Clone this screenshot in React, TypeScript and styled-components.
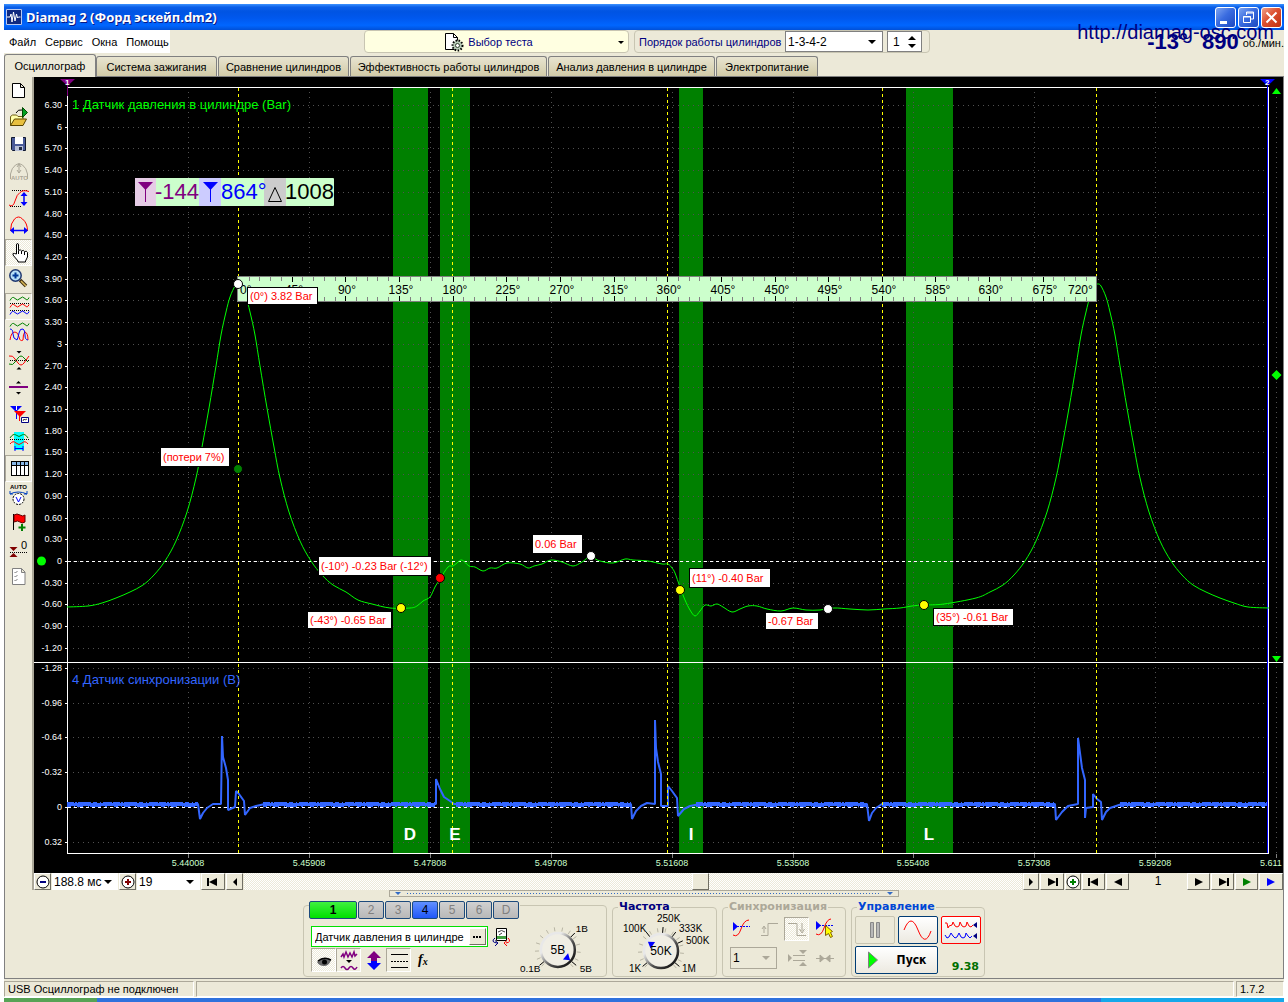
import React from "react";
import styled, { createGlobalStyle, css } from "styled-components";

const SANS = `"Liberation Sans", Arial, sans-serif`;
const FACE = "#ece9d8";
const checker = "repeating-conic-gradient(#ffffff 0 25%, #ece9d8 0 50%) 0 0 / 2px 2px";

const Global = createGlobalStyle`
  * { box-sizing: border-box; }
  body { margin: 0; background: #ffffff; font: 11px/14px ${SANS}; color: #000000; }
  button, select, input, output { font: inherit; color: inherit; margin: 0; }
  button { padding: 0; }
`;

const Shell = styled.div`
  position: relative;
  padding: 4px 4px 0;
`;

/* ---------- title bar ---------- */
const TitleBar = styled.header`
  display: flex;
  align-items: center;
  gap: 4px;
  height: 26px;
  padding: 0 2px;
  background: linear-gradient(#3c92ff 0, #0a5ee8 12%, #0054e3 30%, #0058ee 55%, #0066ff 82%, #0050d8 100%);
`;
const Title = styled.h1`
  flex: 1;
  margin: 0;
  color: #ffffff;
  font: bold 13px/18px "Noto Sans", sans-serif;
  text-shadow: 1px 1px 0 #0a1883;
`;
const WinButtons = styled.div`
  display: flex;
  gap: 2px;
`;
const WinButton = styled.button<{ $close?: boolean }>`
  width: 21px;
  height: 21px;
  border: 1px solid #ffffff;
  border-radius: 3px;
  background: ${(p) =>
    p.$close
      ? "linear-gradient(135deg, #f0a088, #dc5030 45%, #c03010)"
      : "linear-gradient(135deg, #7ea4f0, #3a6ce0 45%, #1c48c0)"};
  svg { display: block; }
`;

/* ---------- header ---------- */
const Header = styled.div`
  display: flex;
  align-items: stretch;
  height: 24px;
  padding-bottom: 1px;
  background: ${FACE};
`;
const Menu = styled.nav`
  display: flex;
  align-items: center;
  gap: 9px;
  width: 166px;
  margin-right: 194px;
  padding-left: 5px;
  background: #ffffff;
  a { color: #000000; text-decoration: none; }
`;
const TestButton = styled.button`
  display: flex;
  align-items: center;
  justify-content: center;
  gap: 4px;
  position: relative;
  width: 265px;
  padding-right: 16px;
  border: 1px solid #c8c5b2;
  border-radius: 4px;
  background: #ffffe1;
  color: #000080;
`;
const ButtonArrow = styled.span`
  position: absolute;
  right: 4px;
  top: 10px;
  border: 3px solid transparent;
  border-top-color: #000000;
  border-bottom: 0;
`;
const OrderBox = styled.div`
  display: flex;
  align-items: center;
  gap: 4px;
  width: 296px;
  margin-left: 5px;
  padding-left: 4px;
  border: 1px solid #c8c5b2;
  border-radius: 4px;
  color: #000080;
`;
const OrderLabel = styled.label`
  width: 142px;
  white-space: nowrap;
`;
const SelectWrap = styled.span<{ $w: number; $h: number; $edge?: string; $arrow?: string; $bg?: string }>`
  position: relative;
  display: block;
  width: ${(p) => p.$w}px;
  height: ${(p) => p.$h}px;
  border: ${(p) => (p.$edge ? `1px solid ${p.$edge}` : "0")};
  background: ${(p) => p.$bg || "#ffffff"};
  &::after {
    content: "";
    position: absolute;
    right: 6px;
    top: calc(50% - 2px);
    border: 4px solid transparent;
    border-top-color: ${(p) => p.$arrow || "#000000"};
    border-bottom: 0;
    pointer-events: none;
  }
  select {
    appearance: none;
    width: 100%;
    height: 100%;
    padding: 0 0 0 2px;
    border: 0;
    outline: 0;
    background: transparent;
    color: #000000;
    font: 12px/14px ${SANS};
    opacity: 1;
  }
`;
const Spin = styled.span`
  display: flex;
  align-items: center;
  justify-content: space-between;
  width: 35px;
  height: 21px;
  padding: 0 5px;
  border: 1px solid #808080;
  background: #ffffff;
  color: #000000;
  input {
    width: 14px;
    padding: 0;
    border: 0;
    background: transparent;
    font: 12px/14px ${SANS};
  }
`;
const Readout = styled.div`
  display: flex;
  flex: 1;
  align-items: flex-end;
  justify-content: flex-end;
  gap: 4px;
  padding-bottom: 1px;
  color: #000080;
  font: bold 22px/20px ${SANS};
  white-space: nowrap;
  span { margin-right: 10px; }
  small { color: #000000; font: 11px/18px ${SANS}; }
`;
const SiteLink = styled.a`
  position: absolute;
  top: 20px;
  right: 14px;
  color: #000080;
  font: 20px/24px ${SANS};
  text-decoration: none;
`;

/* ---------- tabs ---------- */
const Tabs = styled.div`
  display: flex;
  align-items: flex-end;
  gap: 1px;
  height: 23px;
  background: ${FACE};
  border-bottom: 1px solid #808080;
`;
const Tab = styled.button<{ $w: number; $active?: boolean }>`
  width: ${(p) => p.$w}px;
  height: 20px;
  border: 1px solid #808080;
  border-bottom: 0;
  border-radius: 3px 3px 0 0;
  background: linear-gradient(#e8e4d0, #d2cba8);
  white-space: nowrap;
  ${(p) =>
    p.$active &&
    css`
      height: 23px;
      margin: 0 -1px -1px 0;
      background: ${FACE};
    `}
`;

/* ---------- workspace ---------- */
const Workspace = styled.main`
  display: flex;
  background: ${FACE};
  border-left: 1px solid #808080;
`;
const Toolbar = styled.div`
  display: flex;
  flex-direction: column;
  width: 29px;
  border-right: 2px solid #aca899;
`;
const Tool = styled.button<{ $on?: boolean; $checked?: boolean }>`
  display: flex;
  align-items: center;
  justify-content: center;
  width: 27px;
  height: 27px;
  border: 1px solid transparent;
  background: transparent;
  ${(p) =>
    p.$on &&
    css`
      border-color: #aca899 #ffffff #ffffff #aca899;
      background: ${p.$checked ? checker : "#f0eee0"};
    `}
  svg { display: block; flex: none; }
`;
const Stage = styled.div`
  flex: 1;
  min-width: 0;
  border-right: 1px solid #808080;
`;
const Scope = styled.svg`
  display: block;
  width: 100%;
  height: auto;
  background: #000000;
`;
const NavRow = styled.div`
  display: flex;
  align-items: stretch;
  gap: 1px;
  height: 17px;
`;
const NavButton = styled.button<{ $w: number }>`
  display: flex;
  align-items: center;
  justify-content: center;
  flex: none;
  width: ${(p) => p.$w}px;
  border: 1px solid;
  border-color: #ffffff #716f64 #716f64 #ffffff;
  background: ${FACE};
  svg { display: block; }
`;
const Scroll = styled.input`
  appearance: none;
  flex: 1;
  min-width: 0;
  height: 17px;
  background: ${checker};
  &::-webkit-slider-thumb {
    appearance: none;
    width: 17px;
    height: 17px;
    border: 1px solid;
    border-color: #ffffff #716f64 #716f64 #ffffff;
    background: ${FACE};
  }
`;
const PageNo = styled.output`
  width: 56px;
  text-align: center;
  font: 12px/17px ${SANS};
`;

/* ---------- lower dock ---------- */
const Dock = styled.section`
  display: flex;
  flex-direction: column;
  align-items: center;
  height: 89px;
  background: ${FACE};
  border: solid #808080;
  border-width: 0 1px 1px;
`;
const Splitter = styled.div`
  display: flex;
  align-items: center;
  gap: 6px;
  width: 510px;
  height: 7px;
  margin-bottom: 1px;
  padding: 0 5px;
  border: 1px solid #aca899;
  i { border: 3px solid transparent; border-top-color: #316ac5; border-bottom: 0; }
  span { flex: 1; height: 1px; background: repeating-linear-gradient(90deg, #316ac5 0 1px, transparent 1px 3px); }
`;
const Panels = styled.div`
  display: flex;
  gap: 5px;
`;
const Group = styled.fieldset<{ $w: number }>`
  width: ${(p) => p.$w}px;
  height: 79px;
  min-width: 0;
  margin: 0;
  padding: 0 3px;
  border: 1px solid #c8c5b2;
  border-radius: 4px;
`;
const Legend = styled.legend<{ $c: string }>`
  margin-left: 2px;
  padding: 0 1px;
  color: ${(p) => p.$c};
  font: bold 11px/18px "DejaVu Sans", sans-serif;
  margin-bottom: -4px;
`;
const ChannelGroup = styled.div`
  display: flex;
  width: 304px;
  height: 72px;
  margin-top: 7px;
  padding-left: 5px;
  border: 1px solid #c8c5b2;
  border-radius: 4px;
`;
const ChannelMain = styled.div`
  display: flex;
  flex-direction: column;
  width: 212px;
  margin-top: -5px;
`;
const ChannelTabs = styled.div`
  display: flex;
  gap: 1px;
  height: 18px;
  background: ${FACE};
`;
const Channel = styled.button<{ $w?: number; $bg?: string }>`
  width: ${(p) => p.$w || 26}px;
  border: 1px solid #1c4a7c;
  border-radius: 2px;
  background: ${(p) => p.$bg || "linear-gradient(#d0d0d0, #b8b8b8)"};
  color: ${(p) => (p.$bg ? "#000000" : "#808080")};
  font: ${(p) => (p.$w ? "bold " : "")}12px/14px ${SANS};
`;
const SensorRow = styled.div`
  display: flex;
  align-items: center;
  gap: 4px;
  margin-top: 7px;
`;
const SensorField = styled.span`
  display: flex;
  width: 177px;
  height: 21px;
  margin-left: 2px;
  padding: 1px;
  border: 1px solid #00e000;
  background: #ffffff;
  input {
    flex: 1;
    min-width: 0;
    padding: 0 0 0 2px;
    border: 0;
    background: transparent;
  }
`;
const ToggleRow = styled.div`
  display: flex;
  margin: 1px 0 0 2px;
`;
const Toggle = styled(Tool)`
  width: 25px;
  height: 24px;
`;
const SyncGrid = styled.div`
  display: grid;
  grid-template-columns: 28px 28px 28px 28px;
  grid-template-rows: 26px 24px;
  row-gap: 4px;
  padding: 4px 2px 0;
  align-items: center;
`;
const SyncSelect = styled.div`
  grid-column: span 2;
  padding-left: 2px;
`;
const ControlGrid = styled.div`
  display: grid;
  grid-template-columns: 40px 40px 40px;
  grid-template-rows: 28px 28px;
  gap: 2px 3px;
  padding-top: 4px;
`;
const ControlButton = styled.button<{ $edge: string; $wide?: boolean }>`
  display: flex;
  align-items: center;
  justify-content: center;
  grid-column: ${(p) => (p.$wide ? "span 2" : "auto")};
  gap: 18px;
  border: 1px solid ${(p) => p.$edge};
  border-radius: 2px;
  background: ${(p) => (p.$edge === "#c8c5b2" ? FACE : "linear-gradient(#ffffff, #ece9e0)")};
  font: bold 12px/14px "DejaVu Sans Condensed", sans-serif;
  svg { display: block; }
`;
const Volts = styled.output`
  align-self: end;
  padding: 0 2px 0 0;
  text-align: right;
  color: #007000;
  font: bold 11px/14px "DejaVu Sans", sans-serif;
`;

/* ---------- status ---------- */
const Status = styled.footer`
  display: flex;
  gap: 2px;
  height: 19px;
  padding-top: 2px;
  background: ${FACE};
  border-bottom: 1px solid #ffffff;
`;
const Cell = styled.div<{ $w?: number }>`
  flex: ${(p) => (p.$w ? `0 0 ${p.$w}px` : "1")};
  padding-left: 3px;
  border: 1px solid;
  border-color: #aca899 #ffffff #ffffff #aca899;
`;
const Taskbar = styled.div`
  display: flex;
  height: 4px;
  background: #2f72dd;
  &::before { content: ""; width: 93px; background: #57a355; }
  &::after { content: ""; width: 183px; margin-left: auto; background: #16a8ea; }
`;

/* ---------- toolbar drawings ---------- */
const wave = (y: number, a: number, x0 = 3) =>
  `M${x0} ${y + a}q2.5 ${-2.5 * a} 5 ${-a}t5 0t5 0t4 ${-a / 2}`;
const dots = (y: number, x1 = 3, x2 = 22) => (
  <path d={`M${x1} ${y}H${x2}`} stroke="#000" strokeDasharray="1 1" shapeRendering="crispEdges" />
);
const up = (x: number, y: number, r = 2.5, c = "#000") => <path d={`M${x - r} ${y + r}h${2 * r}l${-r} ${-r}z`} fill={c} stroke="none" />;
const down = (x: number, y: number, r = 2.5, c = "#000") => <path d={`M${x - r} ${y}h${2 * r}l${-r} ${r}z`} fill={c} stroke="none" />;

const tools: { name: string; on?: boolean; checked?: boolean; art: React.ReactNode }[] = [
  { name: "Новый", art: <path d="M5.500 5.500h8l4 4v10h-12zM13.500 5.500v4h4" fill="#fff" stroke="#000" /> },
  {
    name: "Открыть",
    art: (
      <>
        <path d="M3.500 20.500v-9l2-1.500h4l1.500 1.500h5v3" fill="#ffffa8" stroke="#6b5a10" />
        <path d="M3.500 20.500l4-6.500h12l-3.500 6.500z" fill="#e8c040" stroke="#5a4500" />
        <path d="M15.500 2.500v10l5-5z" fill="#00a020" stroke="#004800" />
        <path d="M9 8q2-4 6-3" stroke="#000" />
      </>
    ),
  },
  {
    name: "Сохранить",
    art: (
      <>
        <path d="M4.500 5.500h14v13h-13l-1-1z" fill="#4a5a98" stroke="#101830" />
        <path d="M8 5h8v7h-8z" fill="#fff" />
        <path d="M8 14h8v5h-8z" fill="#b8c0d8" />
        <path d="M12 15h3v3h-3z" fill="#202840" />
      </>
    ),
  },
  {
    name: "Авто",
    art: (
      <>
        <path d="M3.500 15q1-6 5-9q3.500-3 7 0q4 3 5 9v5M3.500 15v5M12 5v9M10 8l2-3 2 3M10 11l2 3 2-3" stroke="#aca899" />
        <text x="4" y="21" fontSize="6" fill="#aca899" stroke="none" fontFamily={SANS} fontWeight="bold">AUTO</text>
      </>
    ),
  },
  {
    name: "Масштаб по вертикали",
    art: (
      <>
        {dots(4.5, 5, 21)}
        {dots(20.5, 3, 14)}
        <path d="M2 19q4 3 6-4t5-8.500q3-3 9-1" stroke="#f00" />
        <path d="M17 7v12" stroke="#00f" strokeWidth="1.500" />
        <path d="M13.500 10l3.500-4 3.500 4zM13.500 16l3.500 4 3.500-4z" fill="#00f" />
      </>
    ),
  },
  {
    name: "Масштаб по горизонтали",
    art: (
      <>
        <path d="M3.500 18q0-8 4-12q4-4 8 0q5 4 5 12" stroke="#f00" />
        <path d="M4 17.500h16" stroke="#00f" strokeWidth="1.500" />
        <path d="M7 14l-4 3.500 4 3.500zM17 14l4 3.500-4 3.500z" fill="#00f" />
      </>
    ),
  },
  {
    name: "Рука",
    on: true,
    checked: true,
    art: (
      <path
        d="M9.500 14v-9q0-1.500 1-1.500t1 1.500v5.500q2-1.500 3 .5q2-1.500 3 .5q2-1 3 1v4.500l-2 4v1h-7.500v-1l-5-6q-.5-2.500 1.500-1.500zM11.500 11v3M14.500 11v3M17.500 12v3"
        fill="#fff"
        stroke="#000"
      />
    ),
  },
  {
    name: "Лупа",
    art: (
      <>
        <path d="M13 13l6 6" stroke="#403010" strokeWidth="3.500" />
        <path d="M14 14l5 5" stroke="#d8b858" strokeWidth="1.500" />
        <circle cx="8.500" cy="8.500" r="5.700" fill="#b8e0f8" stroke="#203870" strokeWidth="1.500" />
        <path d="M8.500 5.500v6M5.500 8.500h6" stroke="#003898" strokeWidth="2" />
      </>
    ),
  },
  {
    name: "Раздельно",
    on: true,
    art: (
      <>
        <path d={wave(4.5, 2)} stroke="#008000" />
        {dots(9.5)}
        <path d={wave(11.5, 2)} stroke="#f00" />
        {dots(16.5)}
        <path d={wave(18.5, 2)} stroke="#00f" />
      </>
    ),
  },
  {
    name: "Совместно",
    art: (
      <>
        <path d={wave(3.5, 2)} stroke="#008000" />
        <path d="M3 19q1-8 5-8q3 0 4 5t4 3q0-7 2-8q3 1 3 8" stroke="#f00" />
        <path d="M3 8q3 0 3 5t4 6q1-2 2-7t4-4q2 1 2 6t3 5" stroke="#00f" />
      </>
    ),
  },
  {
    name: "Центр",
    art: (
      <>
        <path d="M2 16q4 2 6-2l3-4q3-4 6 0l4 4" stroke="#008000" />
        <path d="M2 8q4-1 6 3l3 4q3 4 6 0l5-7" stroke="#f00" />
        {dots(12.5)}
        {down(12, 3)}
        {up(12, 19)}
      </>
    ),
  },
  {
    name: "Линия",
    art: (
      <>
        <path d="M2 12h19" stroke="#800080" strokeWidth="2" />
        {up(11.5, 6)}
        {down(11.5, 17)}
      </>
    ),
  },
  {
    name: "Маркеры",
    art: (
      <>
        <path d="M3 4h12l-6 6z" fill="#00f" />
        <path d="M9.500 8v9" stroke="#00f" />
        <path d="M7 9h12l-6 6z" fill="#f00" />
        <path d="M12.500 13v6" stroke="#f00" />
        <path d="M9.500 4v4" stroke="#fff" />
        <path d="M14.500 15.500h7v5h-7z" fill="#fff" stroke="#000080" />
        <path d="M16 19l1-2 1 1 2-1" stroke="#404040" />
      </>
    ),
  },
  {
    name: "Период",
    art: (
      <>
        <path d="M7 3h10v18h-10z" fill="#00ffff" />
        <path d="M3 9q3-5 6-3q3 3 6 0q3-2 6 3" stroke="#008000" />
        <path d="M3 15q3-4 6-1q3 3 6 0q3-3 6 1" stroke="#f00" />
        {dots(10.5)}
        <path d="M8 19.500h8M8 17v5M16 17v5" stroke="#00f" />
      </>
    ),
  },
  {
    name: "Таблица",
    on: true,
    art: (
      <g shapeRendering="crispEdges">
        <path d="M4.500 5.500h17v14h-17z" fill="#fff" stroke="#000" />
        <path d="M5 6h16v3h-16z" fill="#88b8e8" />
        <path d="M5 9.500h16M9.500 6v13M13.500 6v13M17.500 6v13" stroke="#000" />
      </g>
    ),
  },
  {
    name: "Авто напряжение",
    art: (
      <>
        <text x="3" y="6" fontSize="6" fill="#000" fontFamily={SANS} fontWeight="bold">AUTO</text>
        <circle cx="11.500" cy="16" r="5.500" fill="#fff" stroke="#000" strokeDasharray="2 1" />
        <path d="M9 14l2.500 5 2.500-5" stroke="#00f" />
        <path d="M3 11q8-4 17 0M3 8v3h3M20 8v3h-3" stroke="#0040c0" />
      </>
    ),
  },
  {
    name: "Флаг",
    art: (
      <>
        <path d="M6.500 4v16" stroke="#000" />
        <path d="M7 5q3-2 6 0t5 0v7q-3 2-5 0t-6 0z" fill="#f00" stroke="#600000" />
        <path d="M15 14v7M11.500 17.500h7" stroke="#008000" strokeWidth="2" />
      </>
    ),
  },
  {
    name: "Ноль",
    art: (
      <>
        {down(6.5, 10, 4, "#800000")}
        {up(6.5, 16, 4, "#800000")}
        {dots(15, 3, 21)}
        <text x="14" y="12" fontSize="11" fill="#000" fontFamily={SANS}>0</text>
      </>
    ),
  },
  {
    name: "Отчёт",
    art: (
      <>
        <path d="M5.500 4.500h9l3.500 3.500v12.500h-12.500zM14.500 4.500v4h3.500" fill="#fff" stroke="#808080" />
        <path d="M7.500 8l1 1 2-2M7.500 12l1 1 2-2M7.500 16l1 1 2-2" stroke="#808080" />
      </>
    ),
  },
];

/* ---------- oscilloscope ---------- */
type Pt = [number, number];
const line = (pts: Pt[]) => "M" + pts.map((p) => p.join(" ")).join("L");

const smooth = (pts: Pt[]) => {
  let d = `M${pts[0][0]} ${pts[0][1]}`;
  for (let i = 0; i < pts.length - 1; i++) {
    const a = pts[Math.max(0, i - 1)];
    const b = pts[i];
    const c = pts[i + 1];
    const e = pts[Math.min(pts.length - 1, i + 2)];
    d += `C${b[0] + (c[0] - a[0]) / 6} ${b[1] + (c[1] - a[1]) / 6} ${c[0] - (e[0] - b[0]) / 6} ${c[1] - (e[1] - b[1]) / 6} ${c[0]} ${c[1]}`;
  }
  return d;
};

/* half of a compression peak: distance from top dead centre, level */
const flank: Pt[] = [
  [0, 284], [3, 286], [8, 297], [12, 312], [17, 335], [22, 366], [29, 408], [36, 447], [42, 478], [51, 512],
  [62, 541], [73, 561], [84, 575], [95, 585], [108, 592], [122, 598], [136, 603], [150, 606], [171, 607],
];
const pressure: Pt[] = [
  ...flank.slice().reverse().map(([d, y]): Pt => [238 - d, y]),
  ...flank.slice(1, 15).map(([d, y]): Pt => [238 + d, y]),
  [358, 600], [372, 604], [390, 608], [410, 608], [417, 606], [423, 601], [430, 597], [435, 587], [440, 579],
  [448, 567], [453, 566], [457, 563], [462, 560], [469, 566], [475, 567], [483, 571], [490, 568], [497, 568],
  [507, 563], [520, 564], [528, 568], [534, 566], [542, 564], [551, 560], [562, 562], [573, 566], [582, 562],
  [590, 557], [600, 561], [613, 563], [625, 559], [633, 560], [648, 561], [662, 564], [668, 564], [672, 568],
  [675, 573], [680, 587], [685, 600], [690, 610], [695, 616], [700, 611], [705, 605], [711, 606], [717, 604],
  [723, 607], [732, 612], [740, 609], [748, 606], [757, 606], [767, 609], [781, 611], [793, 608], [806, 610],
  [820, 610], [834, 608], [850, 609], [868, 610], [884, 609], [900, 608], [912, 606], [924, 605], [944, 604],
  ...flank.slice(0, 16).reverse().map(([d, y]): Pt => [1098 - d, y]),
  ...flank.slice(1).map(([d, y]): Pt => [1098 + d, y + (d > 140 ? 1 : 0)]),
];

const sync: Pt[] = [
  [67, 804], [198, 804], [200, 819], [203, 813], [207, 808], [213, 804], [221, 804], [222, 736], [223, 757],
  [226, 768], [228, 780], [228, 810], [235, 807], [236, 791], [239, 794], [244, 801], [245, 815], [250, 808],
  [256, 806], [265, 804], [436, 804], [436, 779], [440, 789], [444, 797], [450, 801], [454, 804], [631, 804],
  [632, 819], [636, 811], [641, 806], [647, 803], [655, 804], [655, 720], [656, 748], [658, 762], [661, 774],
  [661, 806], [668, 806], [668, 786], [672, 791], [677, 798], [678, 816], [684, 809], [690, 806], [700, 804],
  [867, 804], [869, 821], [872, 813], [876, 808], [882, 804], [1055, 804], [1056, 820], [1062, 812], [1068, 806],
  [1078, 804], [1078, 738], [1080, 753], [1082, 768], [1085, 780], [1085, 818], [1086, 808], [1093, 807],
  [1093, 794], [1097, 799], [1101, 802], [1102, 820], [1106, 812], [1110, 808], [1122, 804], [1267, 804],
];
const quiet: Pt[] = [[67, 198], [263, 435], [456, 631], [696, 867], [882, 1055], [1120, 1267]];

const bands = [
  { x: 393, w: 35, name: "D" },
  { x: 440, w: 30, name: "E" },
  { x: 679, w: 24, name: "I" },
  { x: 906, w: 47, name: "L" },
];
const upperTicks = Array.from({ length: 26 }, (_, i) => {
  const v = 6.3 - i * 0.3;
  const whole = i % 10 === 1 || i === 21;
  return { y: Math.round(105 + i * 21.714), label: whole ? String(Math.abs(Math.round(v))) : v.toFixed(2) };
});
const lowerTicks = [
  { y: 668, label: "-1.28" }, { y: 703, label: "-0.96" }, { y: 737, label: "-0.64" },
  { y: 772, label: "-0.32" }, { y: 807, label: "0" }, { y: 842, label: "0.32" },
];
const ticks = [...upperTicks, ...lowerTicks];
const times = ["5.44008", "5.45908", "5.47808", "5.49708", "5.51608", "5.53508", "5.55408", "5.57308", "5.59208", "5.611"];
const timeX = (i: number) => Math.round(188 + i * 120.9);

const notes = [
  { x: 160, y: 448, w: 69, h: 18, t: "(потери 7%)" },
  { x: 318, y: 557, w: 113, h: 18, t: "(-10°) -0.23 Bar (-12°)" },
  { x: 307, y: 612, w: 84, h: 16, t: "(-43°) -0.65 Bar" },
  { x: 532, y: 535, w: 50, h: 18, t: "0.06 Bar" },
  { x: 689, y: 569, w: 81, h: 18, t: "(11°) -0.40 Bar" },
  { x: 765, y: 613, w: 53, h: 16, t: "-0.67 Bar" },
  { x: 933, y: 609, w: 80, h: 16, t: "(35°) -0.61 Bar" },
  { x: 247, y: 288, w: 70, h: 16, t: "(0°) 3.82 Bar" },
];
const points = [
  { x: 238, y: 284, c: "#fff" }, { x: 591, y: 556, c: "#fff" }, { x: 828, y: 609, c: "#fff" },
  { x: 401, y: 608, c: "#ff0" }, { x: 680, y: 590, c: "#ff0" }, { x: 924, y: 605, c: "#ff0" },
  { x: 440, y: 578, c: "#f00" }, { x: 238, y: 469, c: "#008000" },
];

function Oscilloscope() {
  return (
    <Scope viewBox="34 77 1249 796" role="img" aria-label="Осциллограмма" fontFamily={SANS} fill="none">
      {bands.map((b) => (
        <rect key={b.name} x={b.x} y="88" width={b.w} height="765" fill="#008000" shapeRendering="crispEdges" />
      ))}
      <g stroke="#505050" strokeDasharray="1 4" shapeRendering="crispEdges">
        {ticks.map((t) => (
          <path key={t.y} d={`M73 ${t.y + 0.5}H1267`} />
        ))}
        {times.map((t, i) => (
          <path key={t} d={`M${timeX(i) + 0.5} 92V853`} />
        ))}
      </g>
      <g fontSize="9" fill="#fff" textAnchor="end">
        {ticks.map((t) => (
          <text key={t.y} x="62" y={t.y + 3}>{t.label}</text>
        ))}
      </g>
      <g stroke="#fff" shapeRendering="crispEdges">
        {ticks.map((t) => (
          <path key={t.y} d={`M65 ${t.y + 0.5}h3`} />
        ))}
        <path d="M67.500 87V853M67 87.500H1269M34 662.500H1283M67 853.500H1269M1268.500 87V854" />
        <path d="M68 561.500H1267M68 807.500H1267" strokeDasharray="3 3" />
        <path d="M1267.500 86V853" stroke="#00f" />
      </g>
      <g fontSize="9" fill="#ccffcc" textAnchor="middle">
        {times.map((t, i) => (
          <React.Fragment key={t}>
            <path d={`M${timeX(i) + 0.5} 854v4`} stroke="#808080" />
            {i < 9 ? <text x={timeX(i)} y="866">{t}</text> : <text x="1260" y="866" textAnchor="start">{t}</text>}
          </React.Fragment>
        ))}
      </g>
      <path d={line(sync)} stroke="#3366ff" strokeWidth="2" strokeLinejoin="bevel" />
      <g stroke="#3366ff" shapeRendering="crispEdges">
        {quiet.map(([a, b]) => (
          <React.Fragment key={a}>
            <path d={`M${a} 804.500H${b}`} strokeWidth="3" />
            <path d={`M${a} 802.500H${b}`} strokeDasharray="7 1 2 1 13 2 4 3 1 2 9 1" />
            <path d={`M${a} 806.500H${b}`} strokeDasharray="4 3 1 2 6 5 1 1 11 4 2 7" />
          </React.Fragment>
        ))}
      </g>
      <g stroke="#ff0" strokeDasharray="3 3" shapeRendering="crispEdges">
        {[238, 452, 667, 882, 1096].map((x) => (
          <path key={x} d={`M${x + 0.5} 88V853`} />
        ))}
      </g>
      <path d={smooth(pressure)} stroke="#00ff00" />
      <text x="72" y="109" fontSize="13" fill="#00ff00">1 Датчик давления в цилиндре (Bar)</text>
      <text x="72" y="684" fontSize="13" fill="#3366ff">4 Датчик синхронизации (В)</text>
      <g fontSize="17" fontWeight="bold" fill="#fff" textAnchor="middle">
        {bands.map((b) => (
          <text key={b.name} x={b.x + Math.floor(b.w / 2)} y="840">{b.name}</text>
        ))}
      </g>

      {/* angle ruler */}
      <rect x="237.500" y="276.500" width="859" height="25" fill="#ccffcc" stroke="#808080" />
      <g shapeRendering="crispEdges">
        {Array.from({ length: 79 }, (_, i) => {
          const x = Math.round(238 + (i + 1) * 10.73) + 0.5;
          const major = (i + 1) % 5 === 0;
          return <path key={i} d={`M${x} 277v${major ? 5 : 4}M${x} 301v${major ? -5 : -4}`} stroke={major ? "#000" : "#808080"} />;
        })}
      </g>
      <g fontSize="12" fill="#000">
        {Array.from({ length: 17 }, (_, i) => {
          const x = Math.round(238 + i * 53.67);
          return i === 16 ? (
            <text key={i} x="1068" y="294">720°</text>
          ) : (
            <text key={i} x={i === 0 ? 240 : x + 2} y="294" textAnchor={i === 0 ? "start" : "middle"}>{i * 45}°</text>
          );
        })}
      </g>

      {/* cursor read-out */}
      <g fontSize="22">
        <rect x="135" y="178" width="199" height="28" rx="1" fill="#ccffcc" />
        <path d="M135 178h21v28h-21z" fill="#e6cce6" />
        <path d="M199 178h22v28h-22z" fill="#ccccff" />
        <path d="M264 178h22v28h-22z" fill="#cccccc" />
        <path d="M138 182h15l-7.500 8z" fill="#800080" />
        <path d="M145.500 188v14" stroke="#800080" />
        <path d="M203 182h15l-7.500 8z" fill="#00f" />
        <path d="M210.500 188v14" stroke="#00f" />
        <path d="M268.500 201.500h13l-6.500-14z" stroke="#000" />
        <text x="155" y="199" fill="#800080">-144</text>
        <text x="221" y="199" fill="#00f">864°</text>
        <text x="285" y="199" fill="#000">1008</text>
      </g>

      {notes.map((n) => (
        <g key={n.t}>
          <rect x={n.x + 0.5} y={n.y - 0.5} width={n.w} height={n.h + 1} fill="#fff" stroke="#000" />
          <text x={n.x + 3} y={n.y + n.h / 2 + 4} fontSize="11" fill="#f00">{n.t}</text>
        </g>
      ))}
      {points.map((p) => (
        <circle key={`${p.x}-${p.y}`} cx={p.x} cy={p.y} r="4.500" fill={p.c} stroke="#000" />
      ))}
      <circle cx="41.500" cy="561" r="4.500" fill="#00ff00" />

      <path d="M60 79h15l-7.500 7z" fill="#800080" />
      <path d="M67.500 84v12" stroke="#800080" />
      <path d="M1260 79h15l-7.500 7z" fill="#00f" />
      <g fontSize="8" fontWeight="bold" fill="#fff">
        <text x="65" y="85">1</text>
        <text x="1265" y="85">2</text>
      </g>
      <path d="M1272 94h9l-4.500-6zM1272 656h9l-4.500 6zM1276.500 370l5 5-5 5-5-5z" fill="#00ff00" />
    </Scope>
  );
}

/* ---------- knobs ---------- */
function Dial({ cx, cy, value, angle, from, marks, id }: {
  cx: number; cy: number; value: string; angle: number; from: number; marks: number[]; id: string;
}) {
  const ray = (deg: number, r1: number, r2: number) => {
    const a = (deg * Math.PI) / 180;
    return `M${cx + r1 * Math.cos(a)} ${cy + r1 * Math.sin(a)}L${cx + r2 * Math.cos(a)} ${cy + r2 * Math.sin(a)}`;
  };
  return (
    <>
      <defs>
        <linearGradient id={id} x1="0" y1="0" x2="1" y2="1">
          <stop offset="0.300" stopColor="#e8e8e8" />
          <stop offset="0.600" stopColor="#505050" />
          <stop offset="1" stopColor="#000000" />
        </linearGradient>
      </defs>
      {Array.from({ length: 14 }, (_, i) => (
        <path key={i} d={ray(from + i * 21, 19, 23)} stroke="#b8b5a4" />
      ))}
      {marks.map((m) => (
        <path key={m} d={ray(m, 18, 24)} stroke="#000" />
      ))}
      <circle cx={cx} cy={cy} r="17" fill="#f0eee4" stroke={`url(#${id})`} strokeWidth="2.500" />
      <path d="M10 -4v8l6-4z" fill="#00f" transform={`translate(${cx} ${cy}) rotate(${angle})`} />
      <text x={cx} y={cy + 4} fontSize="12" textAnchor="middle" fill="#000">{value}</text>
    </>
  );
}

const Tri = ({ left, bar, c = "#000" }: { left?: boolean; bar?: boolean; c?: string }) => (
  <svg width="14" height="10" viewBox="0 0 14 10" fill={c} aria-hidden="true">
    <path d={left ? "M11 1v8l-8-4z" : "M3 1v8l8-4z"} />
    {bar && <path d={left ? "M1 1h2v8h-2z" : "M11 1h2v8h-2z"} />}
  </svg>
);
const Zoom = ({ plus, c }: { plus?: boolean; c: string }) => (
  <svg width="14" height="14" viewBox="0 0 14 14" fill="none" aria-hidden="true">
    <circle cx="7" cy="7" r="6" fill="#fff" stroke="#000" />
    <path d={plus ? "M4 7h6M7 4v6" : "M4 7h6"} stroke={c} strokeWidth="2" />
  </svg>
);
const Ic = ({ w = 24, h = 24, children }: { w?: number; h?: number; children: React.ReactNode }) => (
  <svg width={w} height={h} viewBox={`0 0 ${w} ${h}`} fill="none" aria-hidden="true">{children}</svg>
);

export default function App() {
  return (
    <Shell>
      <Global />
      <TitleBar>
        <Ic w={16} h={16}>
          <path d="M0 0h16v16h-16z" fill="#102a80" />
          <path d="M.5.500h15v15h-15z" stroke="#b8c8f0" />
          <path d="M1 8h3l1-3 1 8 1.500-10 1.500 9 1.500-7 1 4 1-1h2" stroke="#fff" />
        </Ic>
        <Title>Diamag 2 (Форд эскейп.dm2)</Title>
        <WinButtons>
          <WinButton aria-label="Свернуть"><Ic w={19} h={19}><path d="M4 13h7v3h-7z" fill="#fff" /></Ic></WinButton>
          <WinButton aria-label="Развернуть">
            <Ic w={19} h={19}><path d="M7.500 7v-3h7v7h-3M7 5h8M4.500 8.500h7v6h-7zM4 9h8" stroke="#fff" /></Ic>
          </WinButton>
          <WinButton $close aria-label="Закрыть"><Ic w={19} h={19}><path d="M4.500 4.500l10 10M14.500 4.500l-10 10" stroke="#fff" strokeWidth="2" /></Ic></WinButton>
        </WinButtons>
      </TitleBar>

      <Header>
        <Menu>
          <a href="#file">Файл</a>
          <a href="#service">Сервис</a>
          <a href="#windows">Окна</a>
          <a href="#help">Помощь</a>
        </Menu>
        <TestButton>
          <Ic w={20} h={20}>
            <path d="M1.500 1.500h8l4 4v12h-12z" fill="#fff" stroke="#000" />
            <path d="M9.500 1.500v4h4" stroke="#000" />
            <circle cx="13.500" cy="13.500" r="5" fill="#b8ccb8" stroke="#000" strokeWidth="2" strokeDasharray="1.500 1.500" />
            <circle cx="13.500" cy="13.500" r="2" fill="#fff" stroke="#304030" />
          </Ic>
          Выбор теста
          <ButtonArrow />
        </TestButton>
        <OrderBox>
          <OrderLabel htmlFor="order">Порядок работы цилиндров</OrderLabel>
          <SelectWrap $w={98} $h={21} $edge="#808080">
            <select id="order"><option>1-3-4-2</option></select>
          </SelectWrap>
          <Spin>
            <input aria-label="Цилиндр" defaultValue="1" />
            <Ic w={8} h={14}><path d="M0 5h8l-4-4zM0 9h8l-4 4z" fill="#000" /></Ic>
          </Spin>
        </OrderBox>
        <Readout><span>-13°</span>890<small>об./мин.</small></Readout>
      </Header>

      <Tabs role="tablist">
        <Tab role="tab" aria-selected="true" $w={92} $active>Осциллограф</Tab>
        <Tab role="tab" $w={121}>Система зажигания</Tab>
        <Tab role="tab" $w={131}>Сравнение цилиндров</Tab>
        <Tab role="tab" $w={197}>Эффективность работы цилиндров</Tab>
        <Tab role="tab" $w={167}>Анализ давления в цилиндре</Tab>
        <Tab role="tab" $w={102}>Электропитание</Tab>
      </Tabs>

      <Workspace>
        <Toolbar>
          {tools.map((t) => (
            <Tool key={t.name} $on={t.on} $checked={t.checked} aria-label={t.name}>
              <Ic h={25}>{t.art}</Ic>
            </Tool>
          ))}
        </Toolbar>
        <Stage>
          <Oscilloscope />
          <NavRow>
            <NavButton $w={17} aria-label="Уменьшить"><Zoom c="#000080" /></NavButton>
            <SelectWrap $w={66} $h={17}><select aria-label="Развёртка"><option>188.8 мс</option></select></SelectWrap>
            <NavButton $w={17} aria-label="Увеличить"><Zoom plus c="#800000" /></NavButton>
            <SelectWrap $w={63} $h={17}><select aria-label="Кадр"><option>19</option></select></SelectWrap>
            <NavButton $w={24} aria-label="В начало"><Tri left bar /></NavButton>
            <NavButton $w={17} aria-label="Назад"><Ic w={5} h={10}><path d="M5 1v8l-4-4z" fill="#000" /></Ic></NavButton>
            <Scroll type="range" min="0" max="1000" defaultValue="589" aria-label="Прокрутка" />
            <NavButton $w={16} aria-label="Вперёд"><Ic w={5} h={10}><path d="M0 1v8l4-4z" fill="#000" /></Ic></NavButton>
            <NavButton $w={24} aria-label="В конец"><Tri bar /></NavButton>
            <NavButton $w={16} aria-label="Добавить"><Zoom plus c="#008000" /></NavButton>
            <NavButton $w={23} aria-label="Первый кадр"><Tri left bar /></NavButton>
            <NavButton $w={23} aria-label="Предыдущий кадр"><Tri left /></NavButton>
            <PageNo>1</PageNo>
            <NavButton $w={23} aria-label="Следующий кадр"><Tri /></NavButton>
            <NavButton $w={23} aria-label="Последний кадр"><Tri bar /></NavButton>
            <NavButton $w={23} aria-label="Воспроизвести"><Tri c="#008000" /></NavButton>
            <NavButton $w={24} aria-label="Воспроизвести всё"><Tri c="#0000ff" /></NavButton>
          </NavRow>
        </Stage>
      </Workspace>

      <Dock>
        <Splitter><i /><span /><i /></Splitter>
        <Panels>
          <ChannelGroup>
            <ChannelMain>
              <ChannelTabs>
                <Channel $w={48} $bg="linear-gradient(#40f040, #00e000)">1</Channel>
                <Channel>2</Channel>
                <Channel>3</Channel>
                <Channel $bg="linear-gradient(#6090ff, #2058f8)">4</Channel>
                <Channel>5</Channel>
                <Channel>6</Channel>
                <Channel>D</Channel>
              </ChannelTabs>
              <SensorRow>
                <SensorField>
                  <input aria-label="Датчик" defaultValue="Датчик давления в цилиндре" />
                  <NavButton $w={17} aria-label="Выбрать датчик"><Ic w={9} h={3}><path d="M0 1h2v2h-2zM3 1h2v2h-2zM6 1h2v2h-2z" fill="#000" /></Ic></NavButton>
                </SensorField>
                <Ic w={18} h={20}>
                  <path d="M4.500 1.500h10v12h-10z" fill="#fff" stroke="#000" />
                  <path d="M6 5q3.500-3 7 0M7 8l3-2" stroke="#404040" />
                  <path d="M5 9h9v3h-9z" fill="#40a040" />
                  <path d="M3 11q-5 4 2 5M3 13.500l3 2.500-3 3" stroke="#000080" />
                  <path d="M16 11q4 4-2 5M15 13.500l-3 2.500 3 3" stroke="#f00" />
                </Ic>
              </SensorRow>
              <ToggleRow>
                <Toggle $on $checked aria-label="Видимость">
                  <Ic h={22}><path d="M5 13q6-7 14-2q-2 6-7 6t-7-4z" fill="#686868" /><path d="M6 12q6-5 13-1" stroke="#000" strokeWidth="1.500" /><circle cx="12.500" cy="13" r="2.500" fill="#000" /></Ic>
                </Toggle>
                <Toggle $on aria-label="Фильтр">
                  <Ic h={22}><path d="M4 8l2-3 1 3 2-5 2 5 2-4 2 4 2-5 1 4 2-2M4 19q2-3 4 0t4 0q2-3 4 0t4-1" stroke="#800080" strokeWidth="1.500" />{down(12, 11, 3)}</Ic>
                </Toggle>
                <Toggle aria-label="Инверсия">
                  <Ic h={22}><path d="M12 2l7 7h-4v3h-6v-3h-4z" fill="#800080" /><path d="M12 21l7-7h-4v-2h-6v2h-4z" fill="#00f" /></Ic>
                </Toggle>
                <Toggle $on aria-label="Линии">
                  <Ic h={22}><path d="M4 5.500h17M4 18.500h17" stroke="#000" /><path d="M4 12.500h17" stroke="#000" strokeDasharray="2 1" /></Ic>
                </Toggle>
                <Toggle aria-label="Функция">
                  <Ic h={22}><text x="6" y="15" fontSize="14" fontStyle="italic" fontWeight="bold" fontFamily="Liberation Serif, serif" fill="#000">f<tspan fontSize="10" dy="1">x</tspan></text></Ic>
                </Toggle>
              </ToggleRow>
            </ChannelMain>
            <svg width="86" height="70" viewBox="519 906 86 70" fill="none" fontFamily={SANS} fontSize="10">
              <Dial id="gainRim" cx={557} cy={950} value="5В" angle={40} from={135} marks={[-45, 140, 40]} />
              <text x="575" y="932" fill="#000">1В</text>
              <text x="579" y="972" fill="#000">5В</text>
              <text x="519" y="972" fill="#000">0.1В</text>
            </svg>
          </ChannelGroup>

          <Group $w={105}>
            <Legend $c="#000080">Частота</Legend>
            <svg width="97" height="64" viewBox="616 912 97 64" fill="none" fontFamily={SANS} fontSize="10">
              <Dial id="rateRim" cx={661} cy={951} value="50K" angle={215} from={135} marks={[-128, -85, -52, -25, 140, 40]} />
              <g fill="#000">
                <text x="657" y="922">250K</text>
                <text x="623" y="932">100K</text>
                <text x="679" y="932">333K</text>
                <text x="686" y="944">500K</text>
                <text x="629" y="972">1K</text>
                <text x="682" y="972">1M</text>
              </g>
            </svg>
          </Group>

          <Group $w={124}>
            <Legend $c="#aca899">Синхронизация</Legend>
            <SyncGrid>
              <Toggle aria-label="Уровень">
                <Ic><path d="M4 18q5 3 8-6t8-9" stroke="#f00" /><path d="M8 9.500h13" stroke="#00f" strokeDasharray="2 1" /><path d="M4 5v9l5-4.500z" fill="#00f" /></Ic>
              </Toggle>
              <Toggle aria-label="Фронт"><Ic><path d="M4 18.500h7v-12h10M7 16v-6M5 12l2-3 2 3" stroke="#aca899" /></Ic></Toggle>
              <Toggle $on $checked aria-label="Спад"><Ic><path d="M3 6.500h9v12h9M17 6v8M14.500 12l2.500 4 2.500-4" stroke="#aca899" /></Ic></Toggle>
              <Toggle aria-label="Авто уровень">
                <Ic><path d="M3 17q5 3 8-6t7-9" stroke="#f00" /><path d="M6 8.500h15" stroke="#00f" strokeDasharray="2 1" /><path d="M3 4v9l5-4.500z" fill="#00f" /><path d="M12.500 8.500l7 6-2 1 2 4-2 1-2-4-3 2z" fill="#ff0" stroke="#806000" /></Ic>
              </Toggle>
              <SyncSelect>
                <SelectWrap $w={47} $h={22} $edge="#aca899" $arrow="#aca899" $bg={FACE}><select aria-label="Канал синхронизации"><option>1</option></select></SelectWrap>
              </SyncSelect>
              <Toggle aria-label="Пределы"><Ic><path d="M8 9.500h12M8 14.500h12" stroke="#aca899" /><path d="M3 8v8l4-4zM14 4h8l-4 4zM14 20h8l-4-4z" fill="#aca899" /></Ic></Toggle>
              <Toggle aria-label="Центрировать"><Ic><path d="M3 12.500h18M7 9v7l4-3.500zM17 9v7l-4-3.500z" fill="#aca899" stroke="#aca899" /></Ic></Toggle>
            </SyncGrid>
          </Group>

          <Group $w={134}>
            <Legend $c="#0046d5">Управление</Legend>
            <ControlGrid>
              <ControlButton $edge="#c8c5b2" aria-label="Пауза"><Ic w={12} h={16}><path d="M1.500.500h3v15h-3zM7.500.500h3v15h-3z" fill="#b8b8b8" stroke="#888" /></Ic></ControlButton>
              <ControlButton $edge="#003c74" aria-label="Один канал"><Ic w={30} h={20}><path d="M1 10q7-18 14 0t13 1" stroke="#f00" /></Ic></ControlButton>
              <ControlButton $edge="#ff0000" aria-label="Все каналы">
                <Ic w={34} h={22}>
                  <path d="M1 4h2l1 5 1-2 3-1 1-3 2 4 2 1 2-1 1-4 2 4 2 1 2-1 1-4 2 4 2 1 2-2" stroke="#f00" />
                  <path d="M1 16l2 3 2-1 2-4 2 3 2 2 2-1 2-4 2 4 2 1 2-1 1-4 2 3 2 2 2-2" stroke="#00f" />
                  <path d="M33 3v6l-4-3zM33 14v6l-4-3z" fill="#000080" />
                </Ic>
              </ControlButton>
              <ControlButton $edge="#003c74" $wide>
                <Ic w={12} h={18}><path d="M1.500 1v16l9-8z" fill="#00ff00" stroke="#808080" /></Ic>
                Пуск
              </ControlButton>
              <Volts>9.38</Volts>
            </ControlGrid>
          </Group>
        </Panels>
      </Dock>

      <Status>
        <Cell $w={190}>USB Осциллограф не подключен</Cell>
        <Cell />
        <Cell $w={48}>1.7.2</Cell>
      </Status>
      <Taskbar />
      <SiteLink href="http://diamag-osc.com">http://diamag-osc.com</SiteLink>
    </Shell>
  );
}
